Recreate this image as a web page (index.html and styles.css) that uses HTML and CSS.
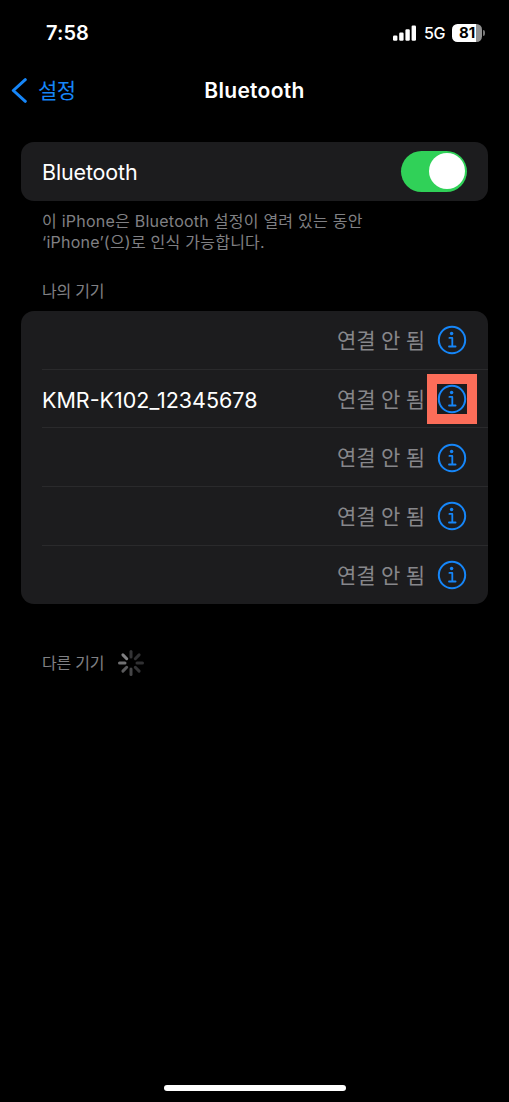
FILE: index.html
```
<!DOCTYPE html>
<html lang="ko">
<head>
<meta charset="utf-8">
<title>Bluetooth</title>
<link rel="stylesheet" href="styles.css">
</head>
<body>
<svg class="defs" width="0" height="0" aria-hidden="true">
  <symbol id="info" viewBox="0 0 30 30">
    <circle cx="15" cy="15" r="13.2" fill="none" stroke="currentColor" stroke-width="2"/>
    <circle cx="14.6" cy="8.4" r="1.75" fill="currentColor"/>
    <path d="M12.4 12.9H15.3V21.3M12 21.5H18.6" fill="none" stroke="currentColor" stroke-width="1.8" stroke-linecap="round" stroke-linejoin="round"/>
  </symbol>
</svg>
<div class="phone">
  <header class="status">
    <span class="time">7:58</span>
    <div class="indicators">
      <svg class="signal" width="24" height="16" viewBox="0 0 24 16" fill="#fff"><rect x="0" y="10.5" width="4.4" height="5.2" rx="1.2"/><rect x="6.2" y="7.6" width="4.4" height="8.1" rx="1.2"/><rect x="12.4" y="4.2" width="4.4" height="11.5" rx="1.2"/><rect x="18.6" y=".5" width="4.4" height="15.2" rx="1.2"/></svg>
      <span class="network">5G</span>
      <span class="battery">81</span><span class="battery-tip"></span>
    </div>
  </header>
  <nav class="nav">
    <a class="back"><svg width="17" height="26" viewBox="0 0 17 26"><path d="M14.3 1.7L2.3 12.5L14.3 23.3" fill="none" stroke="currentColor" stroke-width="3" stroke-linecap="round" stroke-linejoin="round"/></svg><span>설정</span></a>
    <h1 class="title">Bluetooth</h1>
  </nav>
  <main class="content">
    <section class="card toggle-row"><span class="label">Bluetooth</span><span class="switch"><i class="knob"></i></span></section>
    <p class="note">이 iPhone은 Bluetooth 설정이 열려 있는 동안<br>‘iPhone’(으)로 인식 가능합니다.</p>
    <h2 class="heading">나의 기기</h2>
    <section class="card devices">
      <div class="row"><span class="name"></span><span class="state">연결 안 됨</span><span class="info"><svg width="30" height="30"><use href="#info"/></svg></span></div>
      <div class="row"><span class="name">KMR-K102_12345678</span><span class="state">연결 안 됨</span><span class="info marked"><svg width="30" height="30"><use href="#info"/></svg></span></div>
      <div class="row"><span class="name"></span><span class="state">연결 안 됨</span><span class="info"><svg width="30" height="30"><use href="#info"/></svg></span></div>
      <div class="row"><span class="name"></span><span class="state">연결 안 됨</span><span class="info"><svg width="30" height="30"><use href="#info"/></svg></span></div>
      <div class="row"><span class="name"></span><span class="state">연결 안 됨</span><span class="info"><svg width="30" height="30"><use href="#info"/></svg></span></div>
    </section>
    <div class="other"><h2 class="heading">다른 기기</h2>
      <svg class="spinner" width="28" height="28" viewBox="-14 -14 28 28" stroke-width="3" stroke-linecap="round"><path d="M0-6V-11.5" stroke="#343436"/><path d="M4.3-4.3L8.1-8.1" stroke="#303032"/><path d="M6 0H11.5" stroke="#303032"/><path d="M4.3 4.3L8.1 8.1" stroke="#343436"/><path d="M0 6V11.5" stroke="#454547"/><path d="M-4.3 4.3L-8.1 8.1" stroke="#5a5a5c"/><path d="M-6 0H-11.5" stroke="#707072"/><path d="M-4.3-4.3L-8.1-8.1" stroke="#808082"/></svg>
    </div>
  </main>
  <div class="home-bar"></div>
</div>
</body>
</html>
```
FILE: styles.css
```
* { box-sizing: border-box; }
body { margin: 0; background: #000; color: #fff; font-family: Inter, "Noto Sans CJK KR", sans-serif; }
h1, h2, p { margin: 0; }
svg { display: block; flex: none; }
.defs { position: absolute; }
.phone { width: 509px; height: 1102px; display: flex; flex-direction: column; overflow: hidden; }
.status { height: 65px; padding: 0 24px 0 46px; display: flex; align-items: center; justify-content: space-between; }
.time { font-size: 20px; font-weight: 600; letter-spacing: 0.1px; }
.indicators { display: flex; align-items: center; }
.network { margin-left: 7px; width: 22px; font-size: 16px; font-weight: 500; letter-spacing: -0.3px; }
.battery { margin-left: 6px; width: 30px; height: 18px; border-radius: 5.5px; background: linear-gradient(90deg, #fff 81%, #919191 81%); color: #000; font-size: 15px; font-weight: 700; line-height: 18px; text-align: center; }
.battery-tip { width: 2px; height: 6px; margin-left: 1px; border-radius: 0 2px 2px 0; background: #777; }
.nav { height: 52px; padding: 0 11px; display: grid; grid-template-columns: 1fr auto 1fr; align-items: center; }
.back { display: flex; align-items: center; gap: 10px; color: #1686f8; font-size: 21px; line-height: 26px; letter-spacing: -0.6px; }
.title { font-size: 21px; line-height: 26px; font-weight: 600; letter-spacing: 0.3px; }
.content { flex: 1; padding: 25px 21px 0; }
.card { background: #1c1c1e; border-radius: 13px; }
.toggle-row { height: 58.5px; padding: 0 21px; display: flex; align-items: center; justify-content: space-between; }
.label { font-size: 21.5px; line-height: 28px; padding-top: 2px; letter-spacing: -0.15px; }
.switch { width: 66.5px; height: 41px; padding: 2.5px; border-radius: 21px; background: #30d158; display: flex; justify-content: flex-end; }
.knob { width: 36px; height: 36px; border-radius: 50%; background: #fff; }
.note { padding: 10px 21px 0; height: 80px; font-size: 16px; line-height: 21px; color: #808084; letter-spacing: 0.24px; white-space: nowrap; }
.heading { padding-left: 21px; height: 30.5px; font-size: 16px; line-height: 21px; font-weight: 400; color: #808084; letter-spacing: -0.2px; }
.devices { height: 293px; }
.row { height: 58.7px; margin-left: 21px; padding: 1px 21px 0 0; display: flex; align-items: center; border-bottom: 1px solid #2a2a2c; }
.row:last-child { border-bottom: 0; height: 58.2px; }
.name { flex: 1; font-size: 21.5px; line-height: 28px; padding-top: 2px; }
.state { font-size: 21px; line-height: 28px; padding-top: 1px; color: #87878b; letter-spacing: -0.2px; }
.info { margin-left: 12px; color: #1686f8; }
.marked { margin: 0 -10px 0 2px; border: 10px solid #fc6d59; }
.other { padding-top: 45px; display: flex; align-items: center; gap: 13px; }
.other .heading { height: 21px; }
.home-bar { width: 182px; height: 6px; margin: 0 auto 11px 164px; flex: none; border-radius: 3px; background: #fff; }
```
